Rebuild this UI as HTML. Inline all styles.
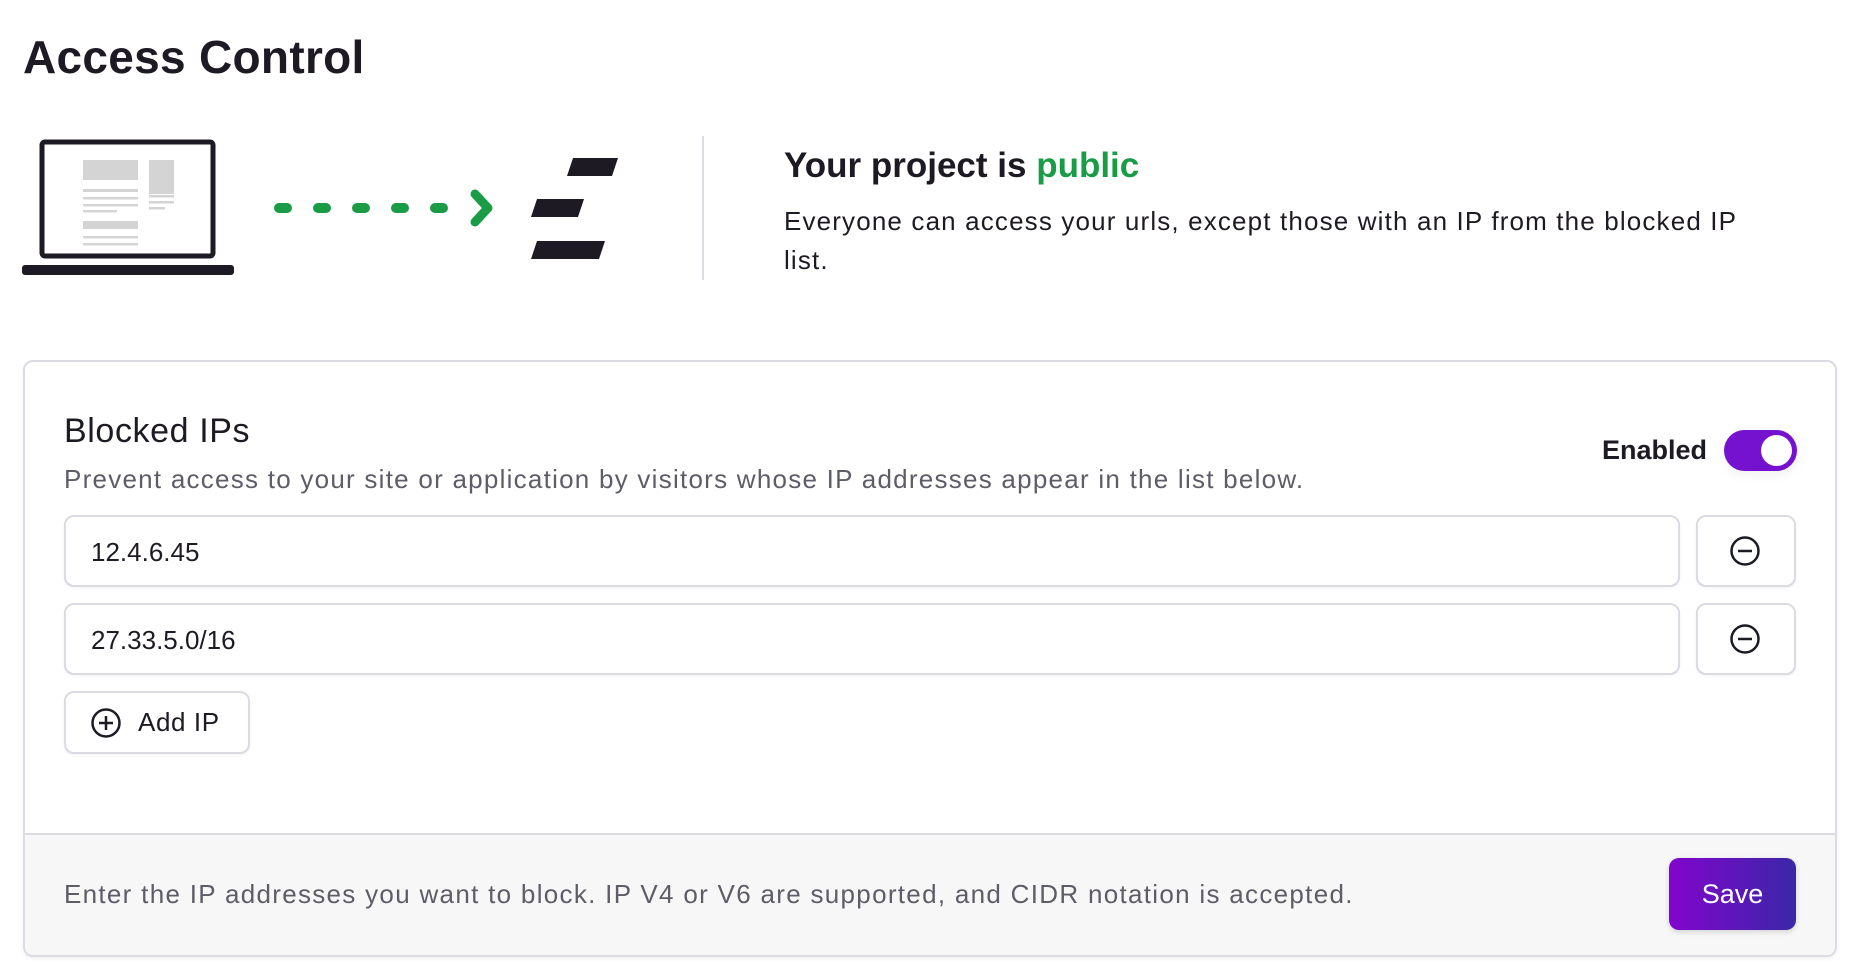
<!DOCTYPE html>
<html><head><meta charset="utf-8"><style>
*{box-sizing:border-box;margin:0;padding:0}
body{width:1860px;height:980px;background:#fff;font-family:"Liberation Sans",sans-serif;color:#1e1a24;position:relative;overflow:hidden}
.a{position:absolute}
h1{position:absolute;left:23px;top:30px;font-size:46px;font-weight:bold;letter-spacing:0.3px}
.card{left:23px;top:360px;width:1814px;height:597px;border:2px solid #dcdbe3;border-radius:10px;overflow:hidden;box-shadow:0 2px 4px rgba(0,0,0,.06)}
.foot{position:absolute;left:0;right:0;bottom:0;height:122px;background:#f7f7f8;border-top:2px solid #dcdbe3}
.inp{border:2px solid #dcdbe3;border-radius:10px;box-shadow:0 1px 2px rgba(0,0,0,.06);background:#fff}
</style></head><body>
<h1>Access Control</h1>
<svg class="a" style="left:0;top:120px" width="640" height="180" viewBox="0 0 640 180">
<rect x="42" y="22" width="171" height="114" fill="#fff" stroke="#1e1a24" stroke-width="5" rx="3"/>
<rect x="22" y="145" width="212" height="10" rx="3" fill="#1e1a24"/>
<rect x="83" y="40" width="55" height="20" fill="#d4d4d4"/>
<rect x="149" y="40" width="25" height="34" fill="#d4d4d4"/>
<rect x="83" y="69" width="55" height="3" fill="#d4d4d4"/><rect x="83" y="77" width="55" height="2.5" fill="#d4d4d4"/><rect x="83" y="84" width="55" height="2.5" fill="#d4d4d4"/><rect x="83" y="90" width="34" height="2.5" fill="#d4d4d4"/>
<rect x="149" y="75" width="25" height="2.5" fill="#d4d4d4"/><rect x="149" y="81" width="25" height="2.5" fill="#d4d4d4"/><rect x="149" y="87" width="16" height="2.5" fill="#d4d4d4"/>
<rect x="83" y="101" width="55" height="8" fill="#d4d4d4"/><rect x="83" y="116" width="55" height="2.5" fill="#d4d4d4"/><rect x="83" y="123" width="55" height="2.5" fill="#d4d4d4"/>
<g stroke="#1a9b45" stroke-width="10" stroke-linecap="round" fill="none">
<path d="M279 88h8M318 88h8M357 88h8M396 88h8M435 88h8"/>
<path d="M475 74l13 14-13 14" stroke-width="9" stroke-linejoin="round"/>
</g>
<g fill="#1e1a24">
<path d="M573 38h45l-6 18h-45z"/><path d="M537 79h47l-6 18h-47z"/><path d="M537 121h68l-6 18h-68z"/>
</g>
</svg>
<div class="a" style="left:702px;top:136px;width:2px;height:144px;background:#dcdbe3"></div>
<div class="a" style="left:784px;top:146px;font-size:35px;font-weight:bold">Your project is <span style="color:#1a9b45">public</span></div>
<div class="a" style="left:784px;top:202px;width:1000px;font-size:26px;line-height:39px;letter-spacing:1.15px">Everyone can access your urls, except those with an IP from the blocked IP list.</div>
<div class="a card">
<div class="a" style="left:39px;top:50px;font-size:34px;letter-spacing:0.6px">Blocked IPs</div>
<div class="a" style="left:39px;top:102px;font-size:26px;color:#5f5c68;letter-spacing:1.25px">Prevent access to your site or application by visitors whose IP addresses appear in the list below.</div>
<div class="a" style="left:1577px;top:73px;font-size:27px;font-weight:bold">Enabled</div>
<div class="a" style="left:1699px;top:68px;width:73px;height:41px;border-radius:21px;background:#7512cf;box-shadow:0 4px 12px rgba(0,0,0,.06)"><div class="a" style="right:5px;top:5px;width:31px;height:31px;border-radius:50%;background:#fff"></div></div>
<div class="a inp" style="left:39px;top:153px;width:1616px;height:72px"><div class="a" style="left:25px;top:20px;font-size:26px">12.4.6.45</div></div>
<div class="a inp" style="left:1671px;top:153px;width:100px;height:72px"><svg class="a" style="left:31px;top:18px" width="32" height="32"><circle cx="16" cy="16" r="13.5" fill="none" stroke="#1e1a24" stroke-width="2.5"/><path d="M9 16h14" stroke="#1e1a24" stroke-width="2.5"/></svg></div>
<div class="a inp" style="left:39px;top:241px;width:1616px;height:72px"><div class="a" style="left:25px;top:20px;font-size:26px">27.33.5.0/16</div></div>
<div class="a inp" style="left:1671px;top:241px;width:100px;height:72px"><svg class="a" style="left:31px;top:18px" width="32" height="32"><circle cx="16" cy="16" r="13.5" fill="none" stroke="#1e1a24" stroke-width="2.5"/><path d="M9 16h14" stroke="#1e1a24" stroke-width="2.5"/></svg></div>
<div class="a inp" style="left:39px;top:329px;width:186px;height:63px"><svg class="a" style="left:24px;top:14px" width="32" height="32"><circle cx="16" cy="16" r="13.5" fill="none" stroke="#1e1a24" stroke-width="2.5"/><path d="M9 16h14M16 9v14" stroke="#1e1a24" stroke-width="2.5"/></svg><div class="a" style="left:72px;top:14px;font-size:26px;letter-spacing:0.6px">Add IP</div></div>
<div class="foot">
<div class="a" style="left:39px;top:44px;font-size:26px;color:#5f5c68;letter-spacing:1.3px">Enter the IP addresses you want to block. IP V4 or V6 are supported, and CIDR notation is accepted.</div>
<div class="a" style="left:1644px;top:23px;width:127px;height:72px;border-radius:10px;background:linear-gradient(90deg,#8205cc,#3a27a8);color:#fff;font-size:27px;text-align:center;line-height:72px;box-shadow:0 2px 6px rgba(0,0,0,.15)">Save</div>
</div>
</div>
</body></html>
